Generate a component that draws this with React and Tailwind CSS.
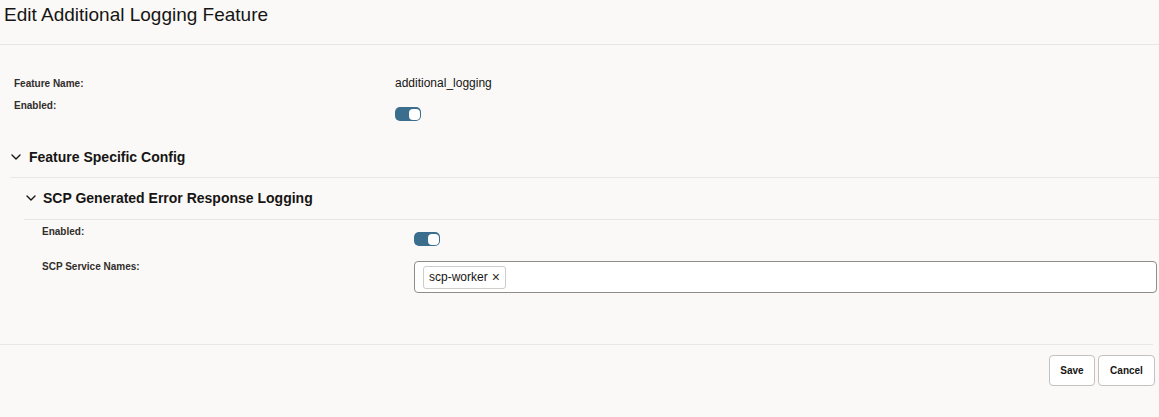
import React, { useState } from 'react';

const font = { fontFamily: '"Liberation Sans", Arial, sans-serif' };

function Chevron() {
  return (
    <svg width="10" height="6" viewBox="0 0 10 6" fill="none" className="shrink-0">
      <path d="M1 1l4 4 4-4" stroke="#161513" strokeWidth="1.4" strokeLinecap="round" strokeLinejoin="round" />
    </svg>
  );
}

function Toggle({ on, onChange }) {
  return (
    <button
      type="button"
      onClick={() => onChange(!on)}
      className={`w-[26px] h-[14px] rounded-[5px] p-[1.5px] flex items-center ${on ? 'bg-[#3b6d8d] justify-end' : 'bg-[#9e9a97] justify-start'}`}
    >
      <span className="block w-[11px] h-[11px] rounded-[4px] bg-white" />
    </button>
  );
}

export default function App() {
  const [enabled, setEnabled] = useState(true);
  const [scpEnabled, setScpEnabled] = useState(true);
  const [services, setServices] = useState(['scp-worker']);

  return (
    <div className="w-[1159px] h-[417px] bg-[#fbf9f8] text-[#161513] overflow-hidden" style={font}>
      <div className="h-[45px] border-b border-[#e9e7e5] pl-[4px] pt-[4px]">
        <h1 className="text-[19px] leading-[22px] font-normal">Edit Additional Logging Feature</h1>
      </div>

      <div className="pt-[30px] pl-[14px]">
        <div className="flex h-[16px] items-center">
          <div className="w-[381px] text-[10px] font-bold text-[#312d2a]">Feature Name:</div>
          <div className="text-[12px]">additional_logging</div>
        </div>
        <div className="flex mt-[6px]">
          <div className="w-[381px] h-[16px] flex items-center text-[10px] font-bold text-[#312d2a]">Enabled:</div>
          <div className="pt-[10px]">
            <Toggle on={enabled} onChange={setEnabled} />
          </div>
        </div>
      </div>

      <div className="ml-[10px] mt-[26px]">
        <div className="flex items-center gap-[8px] h-[20px] pl-[1px] mb-[10px]">
          <Chevron />
          <span className="text-[14px] font-bold">Feature Specific Config</span>
        </div>
        <div className="border-t border-[#e9e7e5]" />

        <div className="ml-[14px] mt-[10px]">
          <div className="flex items-center gap-[7px] h-[20px] pl-[2px] mb-[11px]">
            <Chevron />
            <span className="text-[14px] font-bold">SCP Generated Error Response Logging</span>
          </div>
          <div className="border-t border-[#e9e7e5]" />

          <div className="pl-[18px] pt-[3px]">
            <div className="flex">
              <div className="w-[372px] h-[16px] flex items-center text-[10px] font-bold text-[#312d2a]">Enabled:</div>
              <div className="pt-[9px]">
                <Toggle on={scpEnabled} onChange={setScpEnabled} />
              </div>
            </div>
            <div className="flex mt-[12px]">
              <div className="w-[372px] h-[16px] flex items-center text-[10px] font-bold text-[#312d2a]">SCP Service Names:</div>
              <div className="mt-[3px] w-[743px] h-[32px] border border-[#8f8c89] rounded-[4px] bg-white flex items-center px-[8px] gap-[4px]">
                {services.map((s) => (
                  <span key={s} className="h-[23px] px-[5px] flex items-center gap-[4px] border border-[#cfccc9] rounded-[3px] text-[12px] text-[#161513]">
                    {s}
                    <button type="button" className="text-[14px] leading-none text-[#312d2a]" onClick={() => setServices(services.filter((x) => x !== s))}>×</button>
                  </span>
                ))}
                <input className="flex-1 outline-none bg-transparent text-[12px]" />
              </div>
            </div>
          </div>
        </div>
      </div>

      <div className="mt-[51px] w-[1153px] border-t border-[#e9e7e5]" />
      <div className="flex justify-end gap-[3px] pr-[4px] pt-[10px]">
        <button type="button" className="w-[46px] h-[31px] border border-[#c4c1be] rounded-[4px] bg-white text-[10px] font-bold">Save</button>
        <button type="button" className="w-[57px] h-[31px] border border-[#c4c1be] rounded-[4px] bg-white text-[10px] font-bold">Cancel</button>
      </div>
    </div>
  );
}
